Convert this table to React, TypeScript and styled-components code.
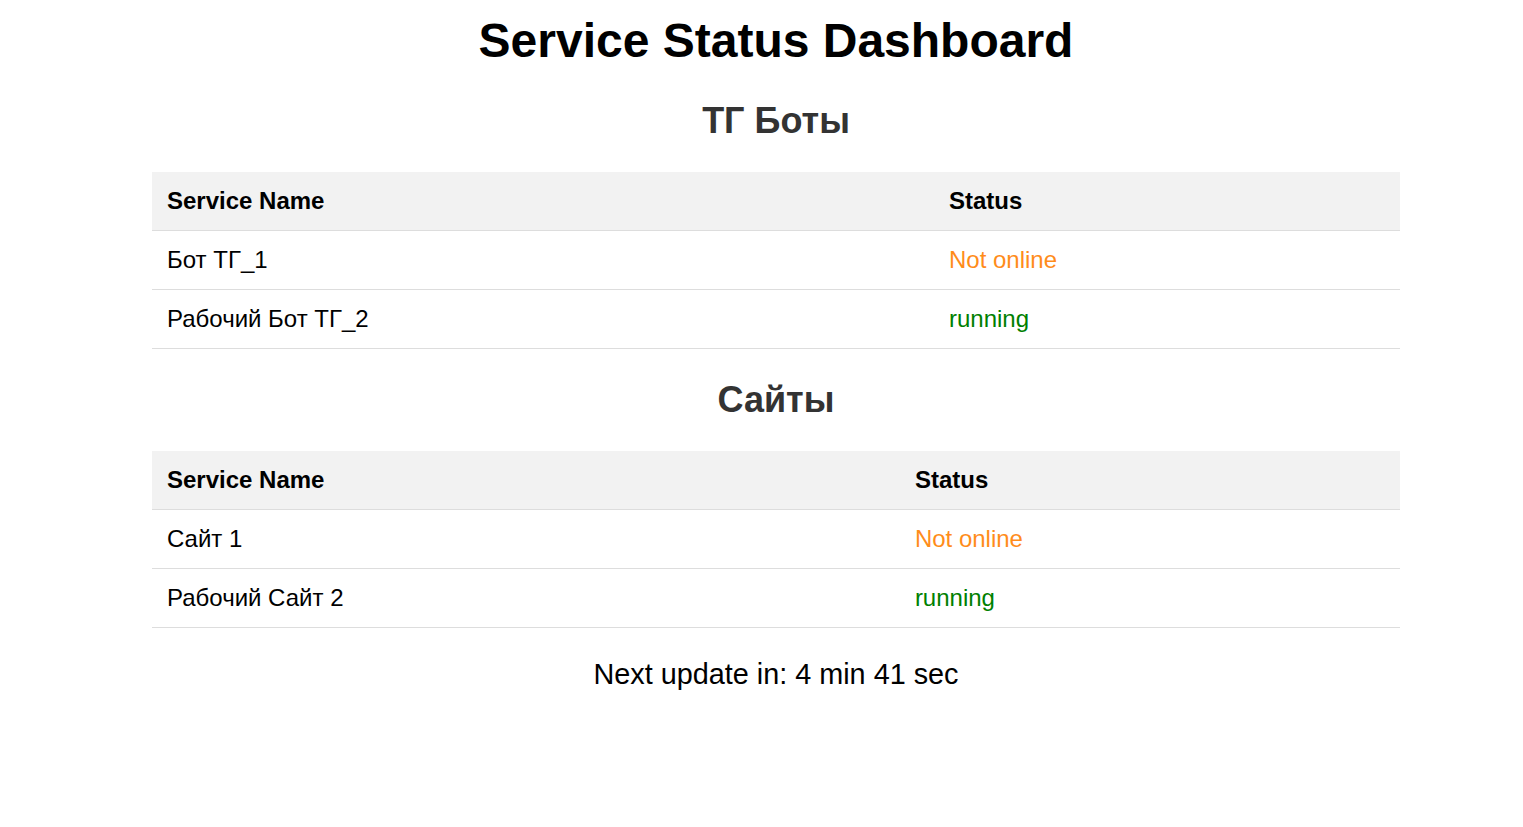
import React from "react";
import styled, { createGlobalStyle } from "styled-components";

const GlobalStyle = createGlobalStyle`
  html, body {
    margin: 0;
    padding: 0;
    background: #ffffff;
  }
  body {
    font-family: "Liberation Sans", Arial, sans-serif;
    color: #000;
  }
`;

const Page = styled.main`
  box-sizing: border-box;
  width: 1523px;
  padding: 13px 123px 40px 152px;
  text-align: center;
`;

const Title = styled.h1`
  margin: 0 0 32px;
  font-size: 48px;
  font-weight: 700;
  line-height: normal;
  color: #000;
`;

const SectionTitle = styled.h2`
  margin: 30px 0;
  font-size: 36px;
  font-weight: 700;
  line-height: normal;
  color: #333;
`;

const Table = styled.table`
  width: 100%;
  border-collapse: collapse;
  text-align: left;
`;

const HeadCell = styled.th`
  background: #f2f2f2;
  padding: 15px;
  font-size: 24px;
  line-height: 28px;
  font-weight: 700;
  color: #000;
  border-bottom: 1px solid #dddddd;
  text-align: left;
`;

const Cell = styled.td<{ $tone?: "ok" | "bad" }>`
  padding: 15px;
  font-size: 24px;
  line-height: 28px;
  border-bottom: 1px solid #dddddd;
  color: ${(p) => (p.$tone === "ok" ? "#008000" : p.$tone === "bad" ? "#ff8c1a" : "#000")};
`;

const Footer = styled.p`
  margin: 30px 0 0;
  font-size: 28.8px;
  line-height: normal;
  color: #000;
`;

type Service = { name: string; status: string };

const sections: { title: string; services: Service[] }[] = [
  {
    title: "ТГ Боты",
    services: [
      { name: "Бот ТГ_1", status: "Not online" },
      { name: "Рабочий Бот ТГ_2", status: "running" },
    ],
  },
  {
    title: "Сайты",
    services: [
      { name: "Сайт 1", status: "Not online" },
      { name: "Рабочий Сайт 2", status: "running" },
    ],
  },
];

function StatusTable({ services }: { services: Service[] }) {
  return (
    <Table>
      <thead>
        <tr>
          <HeadCell>Service Name</HeadCell>
          <HeadCell>Status</HeadCell>
        </tr>
      </thead>
      <tbody>
        {services.map((s) => (
          <tr key={s.name}>
            <Cell>{s.name}</Cell>
            <Cell $tone={s.status === "running" ? "ok" : "bad"}>{s.status}</Cell>
          </tr>
        ))}
      </tbody>
    </Table>
  );
}

export default function App() {
  return (
    <>
      <GlobalStyle />
      <Page>
        <Title>Service Status Dashboard</Title>
        {sections.map((sec) => (
          <section key={sec.title}>
            <SectionTitle>{sec.title}</SectionTitle>
            <StatusTable services={sec.services} />
          </section>
        ))}
        <Footer>Next update in: 4 min 41 sec</Footer>
      </Page>
    </>
  );
}
